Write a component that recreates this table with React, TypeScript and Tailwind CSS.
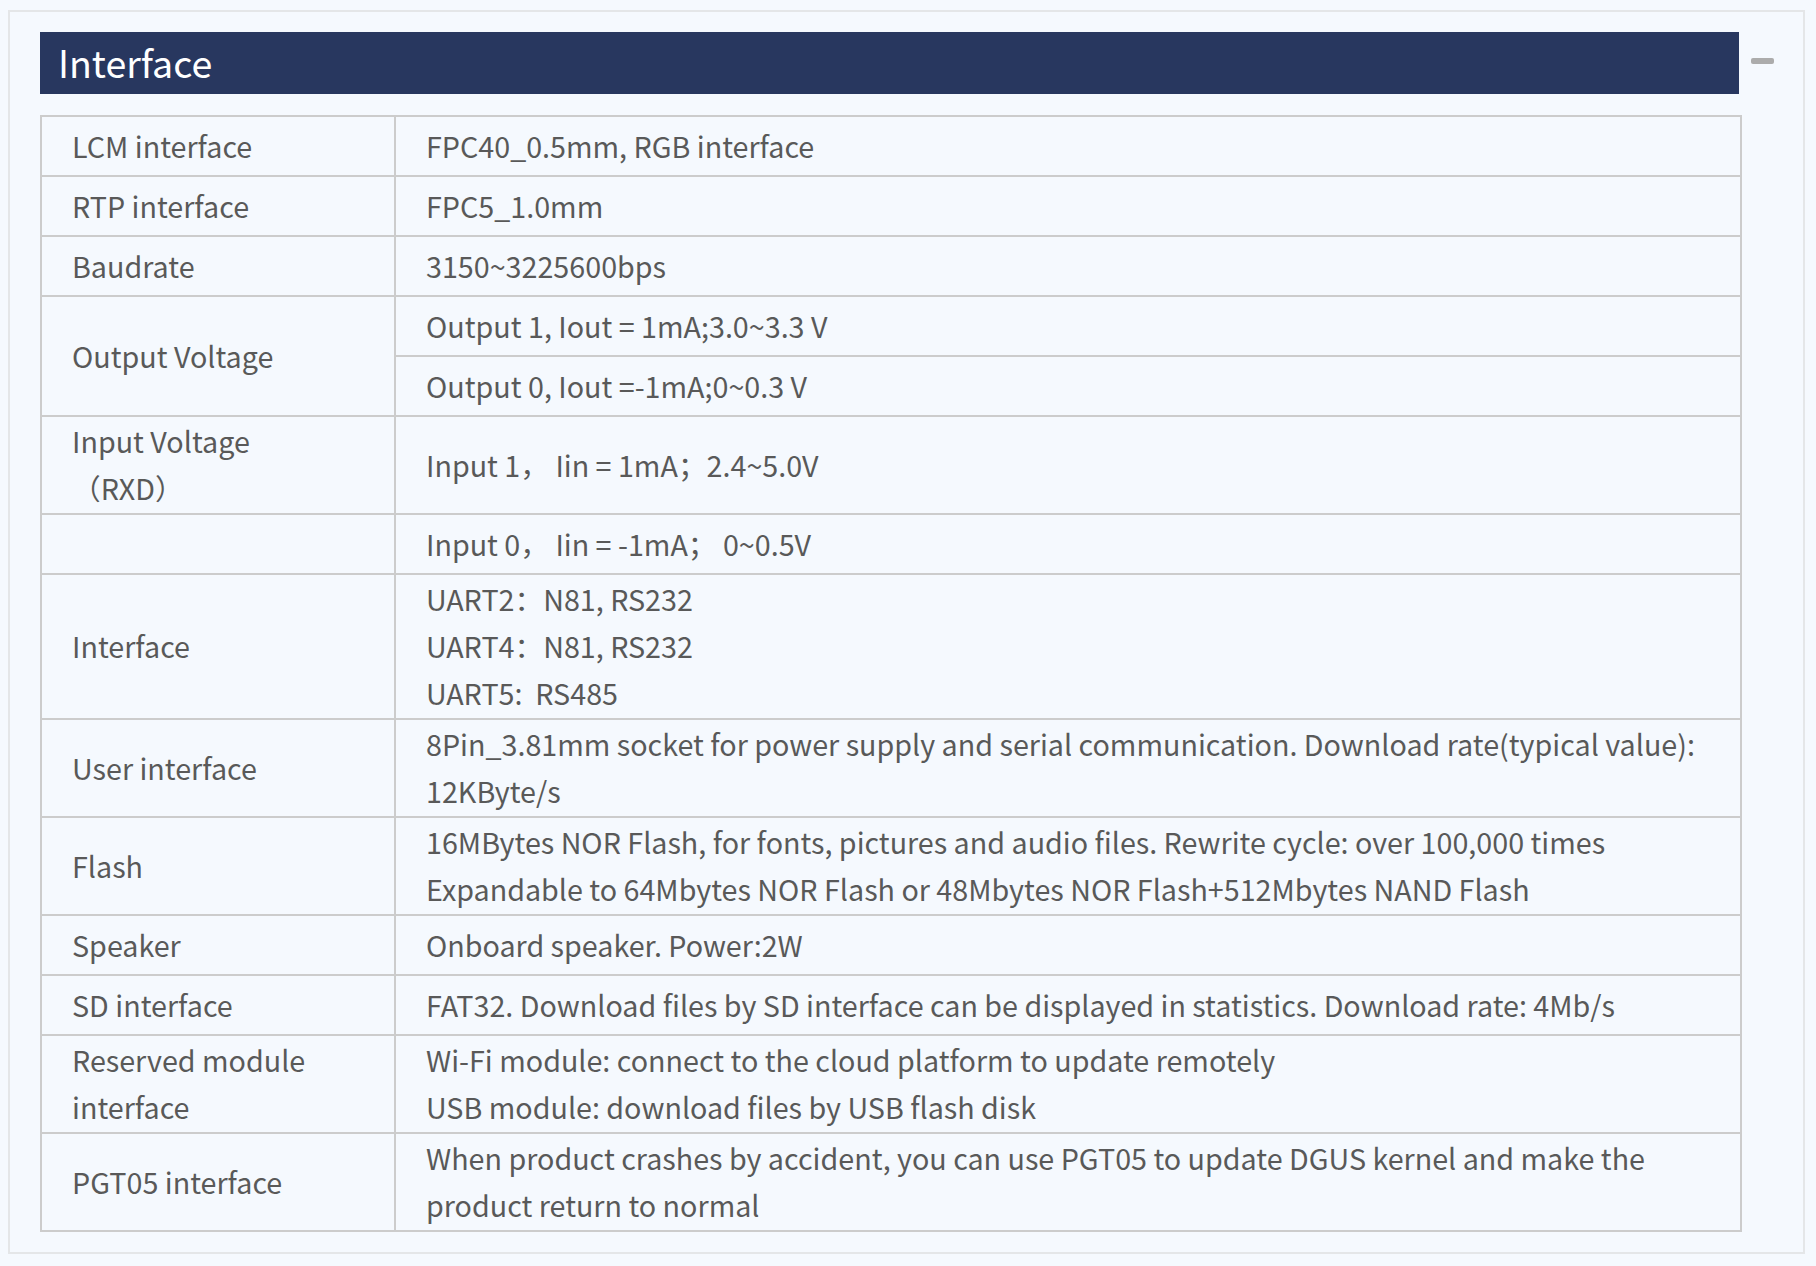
import React from "react";

type Row = {
  label?: React.ReactNode;
  span?: number;
  value: React.ReactNode;
  skipLabel?: boolean;
};

const rows: Row[] = [
  { label: "LCM interface", value: "FPC40_0.5mm, RGB interface" },
  { label: "RTP interface", value: "FPC5_1.0mm" },
  { label: "Baudrate", value: "3150~3225600bps" },
  { label: "Output Voltage", span: 2, value: "Output 1, Iout = 1mA;3.0~3.3 V" },
  { skipLabel: true, value: "Output 0, Iout =-1mA;0~0.3 V" },
  {
    label: (
      <>
        Input Voltage
        <br />
        （RXD）
      </>
    ),
    value: "Input 1， Iin = 1mA；2.4~5.0V",
  },
  { label: "", value: "Input 0， Iin = -1mA； 0~0.5V" },
  {
    label: "Interface",
    value: (
      <>
        UART2：N81, RS232
        <br />
        UART4：N81, RS232
        <br />
        UART5:  RS485
      </>
    ),
  },
  {
    label: "User interface",
    value:
      "8Pin_3.81mm socket for power supply and serial communication. Download rate(typical value): 12KByte/s",
  },
  {
    label: "Flash",
    value: (
      <>
        16MBytes NOR Flash, for fonts, pictures and audio files. Rewrite cycle: over 100,000 times
        <br />
        Expandable to 64Mbytes NOR Flash or 48Mbytes NOR Flash+512Mbytes NAND Flash
      </>
    ),
  },
  { label: "Speaker", value: "Onboard speaker. Power:2W" },
  {
    label: "SD interface",
    value: "FAT32. Download files by SD interface can be displayed in statistics. Download rate: 4Mb/s",
  },
  {
    label: (
      <>
        Reserved module
        <br />
        interface
      </>
    ),
    value: (
      <>
        Wi-Fi module: connect to the cloud platform to update remotely
        <br />
        USB module: download files by USB flash disk
      </>
    ),
  },
  {
    label: "PGT05 interface",
    value:
      "When product crashes by accident, you can use PGT05 to update DGUS kernel and make the product return to normal",
  },
];

const font = { fontFamily: '"Noto Sans CJK SC", "Noto Sans", sans-serif' };

export default function App() {
  return (
    <div className="min-h-screen bg-[#f5f9fe] pt-[10px] pl-[8px] pr-[11px] pb-[13px]" style={font}>
      <div className="relative border-2 border-[#e4e6e8] pl-[30px] pr-[61px] pt-[20px] pb-[20px]">
        <div className="flex">
          <div className="flex-1 mr-[3px] h-[62px] bg-[#28375f] pl-[18px] flex items-center">
            <h2 className="text-[37.5px] leading-none text-white pb-[2px]">Interface</h2>
          </div>
        </div>
        {/* collapse toggle */}
        <button className="absolute top-[46px] right-[29px] w-[23px] h-[6px] rounded-[2px] bg-[#acacac]" />

        <table className="mt-[21px] w-full border-collapse table-fixed text-[28.7px] leading-[47px] text-[#595959]">
          <colgroup>
            <col className="w-[354px]" />
            <col />
          </colgroup>
          <tbody>
            {rows.map((r, i) => (
              <tr key={i} className="h-[60px]">
                {!r.skipLabel && (
                  <td
                    rowSpan={r.span}
                    className="border-2 border-[#cccccc] pl-[30px] pr-[10px] pt-0 pb-[2px] align-middle whitespace-pre-wrap"
                  >
                    {r.label}
                  </td>
                )}
                <td className="border-2 border-[#cccccc] pl-[30px] pr-[30px] pt-0 pb-[2px] align-middle whitespace-pre-wrap">
                  {r.value}
                </td>
              </tr>
            ))}
          </tbody>
        </table>
      </div>
    </div>
  );
}
